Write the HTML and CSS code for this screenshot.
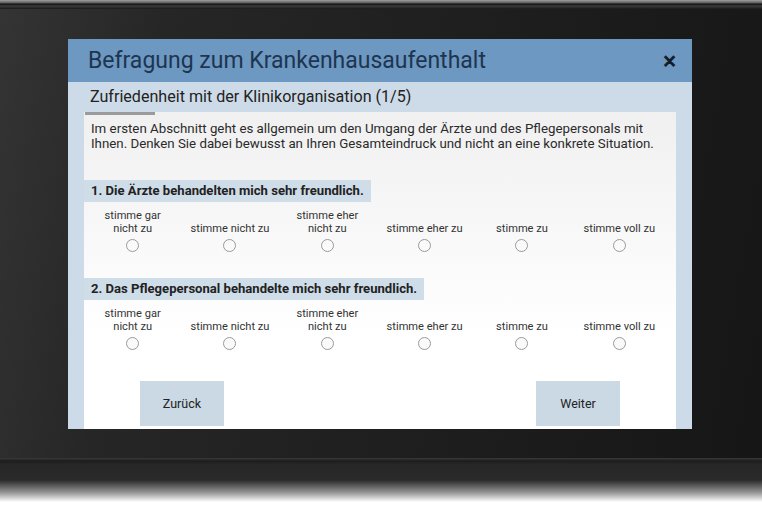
FILE: index.html
```html
<!DOCTYPE html>
<html>
<head>
    <title>Befragung zum Krankenhausaufenthalt</title>
    <link rel="stylesheet" href="styles.css">
</head>
<body>
    <div class="tablet">
        <div class="rim-top"></div>
        <div class="bezel">
            <div class="screen">
                <div class="titlebar">
                    <h1>Befragung zum Krankenhausaufenthalt</h1>
                    <span class="close">&times;</span>
                </div>
                <div class="section">Zufriedenheit mit der Klinikorganisation (1/5)</div>
                <div class="panel">
                    <div class="progress"></div>
                    <p class="intro">Im ersten Abschnitt geht es allgemein um den Umgang der Ärzte und des Pflegepersonals mit Ihnen. Denken Sie dabei bewusst an Ihren Gesamteindruck und nicht an eine konkrete Situation.</p>

                    <div class="question">
                        <div class="question-label">1. Die Ärzte behandelten mich sehr freundlich.</div>
                        <div class="options">
                            <label class="option"><span>stimme gar<br>nicht zu</span><i class="radio"></i></label>
                            <label class="option"><span>stimme nicht zu</span><i class="radio"></i></label>
                            <label class="option"><span>stimme eher<br>nicht zu</span><i class="radio"></i></label>
                            <label class="option"><span>stimme eher zu</span><i class="radio"></i></label>
                            <label class="option"><span>stimme zu</span><i class="radio"></i></label>
                            <label class="option"><span>stimme voll zu</span><i class="radio"></i></label>
                        </div>
                    </div>

                    <div class="question">
                        <div class="question-label">2. Das Pflegepersonal behandelte mich sehr freundlich.</div>
                        <div class="options">
                            <label class="option"><span>stimme gar<br>nicht zu</span><i class="radio"></i></label>
                            <label class="option"><span>stimme nicht zu</span><i class="radio"></i></label>
                            <label class="option"><span>stimme eher<br>nicht zu</span><i class="radio"></i></label>
                            <label class="option"><span>stimme eher zu</span><i class="radio"></i></label>
                            <label class="option"><span>stimme zu</span><i class="radio"></i></label>
                            <label class="option"><span>stimme voll zu</span><i class="radio"></i></label>
                        </div>
                    </div>

                    <div class="nav">
                        <button>Zurück</button>
                        <button>Weiter</button>
                    </div>
                </div>
            </div>
        </div>
        <div class="rim-bottom"></div>
    </div>
</body>
</html>
```

FILE: styles.css
```css
body {
    margin: 0;
    background-color: #ffffff;
    font-family: Roboto, "Liberation Sans", sans-serif;
}
.tablet {
    width: 762px;
}
.rim-top {
    height: 9px;
    background: linear-gradient(#a0a0a0 0, #5a5a5a 3px, #101010 4px, #3c3c3c 6px, #1a1a1a 9px);
}
.bezel {
    padding: 30px 70px 29px 68px;
    background: linear-gradient(100deg, #343434 0%, #262626 20%, #1e1e1e 60%, #161616 100%);
}
.screen {
    width: 624px;
    height: 390px;
    background-color: #cddbe8;
    display: flex;
    flex-direction: column;
    overflow: hidden;
}
.titlebar {
    height: 43px;
    flex: none;
    background-color: #6c98c2;
    display: flex;
    align-items: center;
    justify-content: space-between;
    padding: 0 16px 0 20px;
}
h1 {
    margin: 0;
    font-size: 23px;
    font-weight: normal;
    color: #1e3550;
}
.close {
    font-size: 24px;
    color: #111a26;
    line-height: 1;
    -webkit-text-stroke: 0.6px #111a26;
}
.section {
    height: 30px;
    flex: none;
    line-height: 30px;
    padding-left: 22px;
    font-size: 16.1px;
    color: #222222;
}
.panel {
    flex: 1;
    margin: 0 16px;
    background: linear-gradient(#f0f0f0, #ffffff 70%);
}
.progress {
    width: 70px;
    height: 3px;
    margin-left: 1px;
    background-color: #9b9b9b;
}
.intro {
    margin: 6px 20px 0 7px;
    font-size: 13.3px;
    line-height: 15px;
    color: #2a2a2a;
}
.question {
    margin-top: 29px;
}
.question + .question {
    margin-top: 26px;
}
.question-label {
    display: inline-block;
    height: 22px;
    line-height: 22px;
    padding: 0 7px 0 7px;
    background-color: #cfdde9;
    font-size: 13.1px;
    font-weight: bold;
    color: #222222;
}
.options {
    display: grid;
    grid-template-columns: repeat(6, 1fr);
    width: 584px;
    margin-top: 7px;
}
.option {
    display: flex;
    flex-direction: column;
    align-items: center;
}
.option span {
    height: 26px;
    display: flex;
    align-items: flex-end;
    text-align: center;
    font-size: 11.1px;
    line-height: 13px;
    color: #333333;
}
.radio {
    width: 11px;
    height: 11px;
    margin-top: 4px;
    border: 1px solid #9a9a9a;
    border-radius: 50%;
    background-color: #fafafa;
}
.nav {
    display: flex;
    justify-content: space-between;
    padding: 0 56px;
    margin-top: 31px;
}
.nav button {
    width: 84px;
    height: 45px;
    border: none;
    background-color: #cbd9e5;
    font-family: Roboto, "Liberation Sans", sans-serif;
    font-size: 12.5px;
    color: #222222;
}
.rim-bottom {
    height: 44px;
    background: linear-gradient(#3a3a3a 0, #1c1c1c 3px, #262626 6px, #2a2a2a 22px, #9a9a9a 35px, #ffffff 44px);
}
```
